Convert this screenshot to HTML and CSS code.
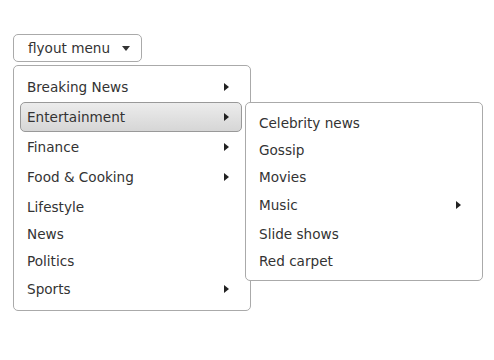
FILE: index.html
```html
<!DOCTYPE html>
<html lang="en">
    <head>
        <meta charset="UTF-8" />
        <meta name="viewport" content="width=device-width, initial-scale=1.0" />
        <title>Flyout menu</title>
        <link rel="stylesheet" href="styles.css">
    </head>

    <body>
        <div class="page">
            <button class="toggle" type="button">
                <span>flyout menu</span>
                <span class="caret"></span>
            </button>

            <ul class="menu">
                <li class="item has-sub">Breaking News <span class="arrow"></span></li>
                <li class="item has-sub active">
                    Entertainment <span class="arrow"></span>
                    <ul class="menu submenu">
                        <li class="item">Celebrity news</li>
                        <li class="item">Gossip</li>
                        <li class="item">Movies</li>
                        <li class="item has-sub">Music <span class="arrow"></span></li>
                        <li class="item">Slide shows</li>
                        <li class="item">Red carpet</li>
                    </ul>
                </li>
                <li class="item has-sub">Finance <span class="arrow"></span></li>
                <li class="item has-sub">Food &amp; Cooking <span class="arrow"></span></li>
                <li class="item">Lifestyle</li>
                <li class="item">News</li>
                <li class="item">Politics</li>
                <li class="item has-sub">Sports <span class="arrow"></span></li>
            </ul>
        </div>
    </body>
</html>
```

FILE: styles.css
```css
body {
    margin: 0;
    background-color: #fff;
    font-family: "DejaVu Sans", Verdana, sans-serif;
    font-size: 13.6px;
    color: #333;
}

.page {
    padding: 34px 13px;
    display: flex;
    flex-direction: column;
    align-items: flex-start;
    gap: 3px;
}

.toggle {
    display: flex;
    align-items: center;
    gap: 12px;
    height: 28px;
    width: 129px;
    padding: 0 9px 0 14px;
    border: 1px solid #aaa;
    border-radius: 5px;
    background-color: #fff;
    font: inherit;
    color: #333;
}

.caret {
    width: 0;
    height: 0;
    border-left: 4px solid transparent;
    border-right: 4px solid transparent;
    border-top: 5px solid #333;
}

.menu {
    list-style: none;
    margin: 0;
    padding: 6px 8px 6px 6px;
    width: 238px;
    box-sizing: border-box;
    border: 1px solid #aaa;
    border-radius: 5px;
    background-color: #fff;
}

.item {
    position: relative;
    display: flex;
    align-items: center;
    justify-content: space-between;
    height: 27px;
    padding: 0 12px 0 6px;
    border: 1px solid transparent;
    border-radius: 5px;
    box-sizing: border-box;
}

.item.has-sub {
    height: 30px;
}

.item.has-sub + .item:not(.has-sub) {
    padding-top: 2px;
    height: 28px;
}

.item.active {
    border-color: #999;
    background-image: linear-gradient(#ececec, #d6d6d6);
}

.arrow {
    width: 0;
    height: 0;
    border-top: 4px solid transparent;
    border-bottom: 4px solid transparent;
    border-left: 5px solid #222;
}

.submenu {
    position: absolute;
    top: -1px;
    left: 224px;
    z-index: 2;
}

.submenu .item.has-sub + .item:not(.has-sub) {
    padding-top: 0;
    height: 27px;
}
```
